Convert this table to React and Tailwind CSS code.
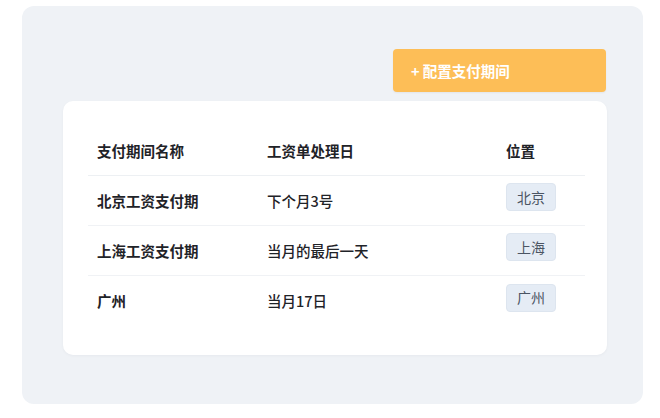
import React from 'react';

const rows = [
  { name: '北京工资支付期', day: '下个月3号', place: '北京' },
  { name: '上海工资支付期', day: '当月的最后一天', place: '上海' },
  { name: '广州', day: '当月17日', place: '广州' },
];

const App = () => {
  return (
    <div
      className="w-[660px] h-[418px] bg-white pt-[6px] pl-[22px] pr-[17px] pb-[14px]"
      style={{ fontFamily: '"Noto Sans CJK SC", "Noto Sans", sans-serif' }}
    >
      <div className="h-[398px] bg-[#eff2f6] rounded-[12px] pt-[43px] pl-[41px] pr-[36px] flex flex-col">
        <div className="flex justify-end pr-[1px]">
          <button className="w-[213px] h-[43px] bg-[#fdbe57] rounded-[4px] text-white font-bold text-[14.5px] text-left pl-[18px] shadow-[0_1px_2px_rgba(0,0,0,0.05)]">
            + 配置支付期间
          </button>
        </div>
        <div className="mt-[9px] h-[254px] bg-white rounded-[10px] pt-[25px] pl-[25px] pr-[22px] shadow-[0_1px_3px_rgba(15,23,42,0.04)]">
          <div className="grid grid-cols-[170px_239px_1fr] h-[50px] items-center border-b border-[#edf0f3] text-[14.5px] font-bold text-[#1f2328]">
            <div className="pl-[9px]">支付期间名称</div>
            <div className="pl-[9px]">工资单处理日</div>
            <div className="pl-[9px]">位置</div>
          </div>
          {rows.map((r, i) => (
            <div
              key={r.name}
              className={`grid grid-cols-[170px_239px_1fr] h-[50px] items-center text-[14.5px] text-[#1f2328] ${i < rows.length - 1 ? 'border-b border-[#f0f2f5]' : ''}`}
            >
              <div className="pl-[9px] font-semibold">{r.name}</div>
              <div className="pl-[9px] font-medium">{r.day}</div>
              <div className="pl-[9px] flex mb-[7px]">
                <span className="inline-flex items-center justify-center w-[50px] h-[28px] rounded-[4px] bg-[#e5ecf5] border border-[#dde5ef] text-[14px] text-[#4b5563]">
                  {r.place}
                </span>
              </div>
            </div>
          ))}
        </div>
      </div>
    </div>
  );
};

export default App;
